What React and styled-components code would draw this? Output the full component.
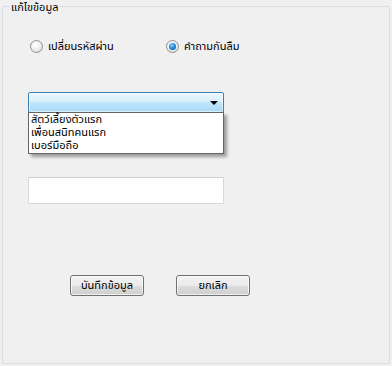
import React from "react";
import styled, { createGlobalStyle } from "styled-components";

const Global = createGlobalStyle`
  html, body { margin: 0; padding: 0; background: #f0f0f0; }
  body { font-family: Tahoma, "Noto Sans Thai", "Noto Sans", "DejaVu Sans", sans-serif; font-size: 11px; color: #000; }
`;

const Window = styled.div`
  width: 392px;
  height: 366px;
  background: #f0f0f0;
  padding: 6px 2px 0 2px;
  box-sizing: border-box;
`;

const Group = styled.div`
  position: relative;
  box-sizing: border-box;
  width: 388px;
  height: 358px;
  border: 1px solid #d5dfe5;
  border-radius: 3px;
  padding: 33px 0 0 25px;
  display: flex;
  flex-direction: column;
`;

const Title = styled.span`
  position: absolute;
  top: -6px;
  left: 6px;
  padding: 0 2px;
  background: #f0f0f0;
  line-height: 14px;
  font-size: 11px;
`;

const RadioRow = styled.div`
  display: flex;
  align-items: center;
  height: 13px;
  margin-left: 2px;
`;

const RadioItem = styled.label`
  display: flex;
  align-items: center;
  gap: 5px;
  width: ${p => p.$w}px;
  line-height: 13px;
`;

const RadioCircle = styled.span`
  position: relative;
  width: 13px;
  height: 13px;
  box-sizing: border-box;
  border-radius: 50%;
  border: 1px solid #8e8f8f;
  background: radial-gradient(circle at 40% 35%, #ffffff 0%, #f4f4f4 35%, #d6d6d6 100%);
  flex: none;
  &::after {
    content: "";
    display: ${p => (p.$checked ? "block" : "none")};
    position: absolute;
    left: 2px;
    top: 2px;
    width: 7px;
    height: 7px;
    border-radius: 50%;
    background: radial-gradient(circle at 40% 35%, #8ad6ff 0%, #2a8ad4 45%, #0d4f8c 100%);
  }
`;

const ComboWrap = styled.div`
  position: relative;
  margin-top: 39px;
  width: 196px;
`;

const Combo = styled.div`
  box-sizing: border-box;
  height: 21px;
  border: 1px solid #3c7fb1;
  border-radius: 2px;
  background: linear-gradient(#eaf6fd 0%, #d9f0fc 45%, #bee6fd 50%, #a7d9f5 100%);
  box-shadow: inset 0 0 0 1px rgba(255,255,255,0.6);
  display: flex;
  align-items: center;
  justify-content: flex-end;
  padding-right: 5px;
`;

const Arrow = styled.span`
  width: 0;
  height: 0;
  border-left: 4px solid transparent;
  border-right: 4px solid transparent;
  border-top: 4px solid #000;
`;

const DropList = styled.ul`
  position: absolute;
  top: 20px;
  left: 0;
  width: 196px;
  box-sizing: border-box;
  margin: 0;
  padding: 0 0 1px 0;
  list-style: none;
  background: #fff;
  border: 1px solid #646464;
  box-shadow: 3px 3px 3px rgba(0,0,0,0.35);
  z-index: 2;
`;

const DropItem = styled.li`
  height: 13px;
  line-height: 13px;
  padding-left: 2px;
  white-space: nowrap;
`;

const TextBox = styled.div`
  box-sizing: border-box;
  margin-top: 64px;
  width: 196px;
  height: 27px;
  background: #fff;
  border: 1px solid #d9d9d9;
  border-top-color: #cfcfcf;
`;

const ButtonRow = styled.div`
  display: flex;
  gap: 32px;
  margin-top: 71px;
  margin-left: 42px;
`;

const Button = styled.button`
  box-sizing: border-box;
  width: 74px;
  height: 21px;
  padding: 0;
  border: 1px solid #707070;
  border-radius: 3px;
  background: linear-gradient(#f2f2f2 0%, #ebebeb 50%, #dddddd 51%, #cfcfcf 100%);
  box-shadow: inset 0 0 0 1px rgba(255,255,255,0.7);
  font-family: inherit;
  font-size: 11px;
  color: #000;
  line-height: 13px;
`;

export default function App() {
  return (
    <>
      <Global />
      <Window>
        <Group>
          <Title>แก้ไขข้อมูล</Title>
          <RadioRow>
            <RadioItem $w={136}>
              <RadioCircle />
              <span>เปลี่ยนรหัสผ่าน</span>
            </RadioItem>
            <RadioItem $w={120}>
              <RadioCircle $checked />
              <span>คำถามกันลืม</span>
            </RadioItem>
          </RadioRow>
          <ComboWrap>
            <Combo>
              <Arrow />
            </Combo>
            <DropList>
              <DropItem>สัตว์เลี้ยงตัวแรก</DropItem>
              <DropItem>เพื่อนสนิทคนแรก</DropItem>
              <DropItem>เบอร์มือถือ</DropItem>
            </DropList>
          </ComboWrap>
          <TextBox />
          <ButtonRow>
            <Button>บันทึกข้อมูล</Button>
            <Button>ยกเลิก</Button>
          </ButtonRow>
        </Group>
      </Window>
    </>
  );
}
